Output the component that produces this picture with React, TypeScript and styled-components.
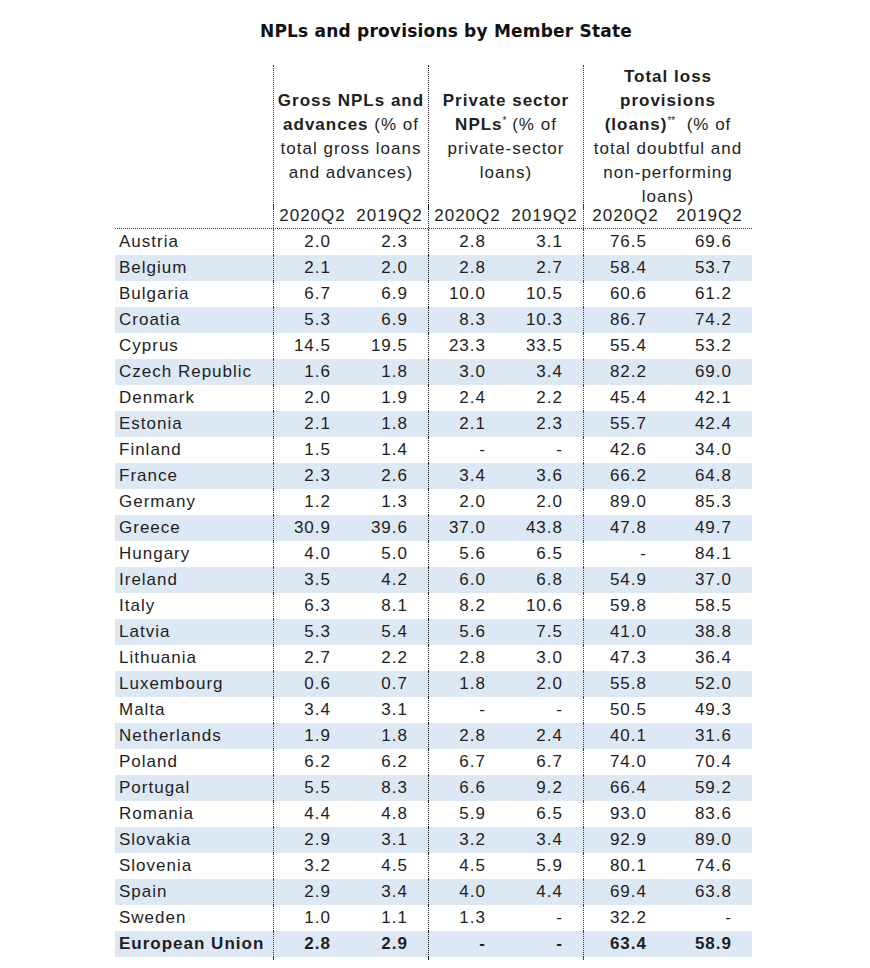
import React from "react";
import styled, { createGlobalStyle } from "styled-components";

const Global = createGlobalStyle`
  html, body { margin: 0; padding: 0; background: #ffffff; }
  body { font-family: "Liberation Sans", Arial, sans-serif; color: #1e1e1e; }
`;

const COLS = "158px 78px 77px 78px 77px 84px 85px";
const LINE = "1px dotted #3a3a3a";
const LINE_DARK = "1px dotted #111111";

const Page = styled.div`
  width: 870px;
  height: 968px;
  display: flex;
  flex-direction: column;
`;

const Title = styled.h1`
  margin: 0;
  padding: 20px 0 0 260px;
  height: 65px;
  box-sizing: border-box;
  font-family: "DejaVu Sans", Verdana, sans-serif;
  font-weight: bold;
  font-size: 17px;
  line-height: 22px;
  letter-spacing: 0.2px;
  color: #111;
`;

const Table = styled.div`
  margin-left: 115px;
  width: 637px;
  display: flex;
  flex-direction: column;
  font-size: 17px;
  letter-spacing: 1px;
`;

const GridRow = styled.div<{ $shaded?: boolean; $h: number; $rule?: boolean }>`
  display: grid;
  grid-template-columns: ${COLS};
  height: ${(p) => p.$h}px;
  background: ${(p) => (p.$shaded ? "#dde8f5" : "transparent")};
  border-bottom: ${(p) => (p.$rule ? LINE : "none")};
`;

const Cell = styled.div<{ $left?: "light" | "dark"; $bold?: boolean; $span?: number }>`
  grid-column: span ${(p) => p.$span ?? 1};
  border-left: ${(p) => (p.$left === "dark" ? LINE_DARK : p.$left === "light" ? LINE : "none")};
  font-weight: ${(p) => (p.$bold ? "bold" : "normal")};
  display: flex;
  align-items: center;
  white-space: nowrap;
  overflow: visible;
  min-width: 0;
`;

const GroupCell = styled(Cell)`
  justify-content: center;
  text-align: center;
  line-height: 24px;
`;

const GroupText = styled.div`
  display: flex;
  flex-direction: column;
  align-items: center;
  width: 100%;
`;

const Bold = styled.span`
  font-weight: bold;
`;

const Star = styled.sup`
  font-size: 10px;
  line-height: 0;
  letter-spacing: 0;
  vertical-align: 6px;
`;

const YearCell = styled(Cell)`
  justify-content: center;
`;

const NameCell = styled(Cell)`
  padding-left: 4px;
`;

const NumCell = styled(Cell)`
  justify-content: flex-end;
  padding-right: 20px;
`;

const Spacer = styled.div`
  display: grid;
  grid-template-columns: ${COLS};
  height: 2px;
`;

type Row = [string, string, string, string, string, string, string];

const rows: Row[] = [
  ["Austria", "2.0", "2.3", "2.8", "3.1", "76.5", "69.6"],
  ["Belgium", "2.1", "2.0", "2.8", "2.7", "58.4", "53.7"],
  ["Bulgaria", "6.7", "6.9", "10.0", "10.5", "60.6", "61.2"],
  ["Croatia", "5.3", "6.9", "8.3", "10.3", "86.7", "74.2"],
  ["Cyprus", "14.5", "19.5", "23.3", "33.5", "55.4", "53.2"],
  ["Czech Republic", "1.6", "1.8", "3.0", "3.4", "82.2", "69.0"],
  ["Denmark", "2.0", "1.9", "2.4", "2.2", "45.4", "42.1"],
  ["Estonia", "2.1", "1.8", "2.1", "2.3", "55.7", "42.4"],
  ["Finland", "1.5", "1.4", "-", "-", "42.6", "34.0"],
  ["France", "2.3", "2.6", "3.4", "3.6", "66.2", "64.8"],
  ["Germany", "1.2", "1.3", "2.0", "2.0", "89.0", "85.3"],
  ["Greece", "30.9", "39.6", "37.0", "43.8", "47.8", "49.7"],
  ["Hungary", "4.0", "5.0", "5.6", "6.5", "-", "84.1"],
  ["Ireland", "3.5", "4.2", "6.0", "6.8", "54.9", "37.0"],
  ["Italy", "6.3", "8.1", "8.2", "10.6", "59.8", "58.5"],
  ["Latvia", "5.3", "5.4", "5.6", "7.5", "41.0", "38.8"],
  ["Lithuania", "2.7", "2.2", "2.8", "3.0", "47.3", "36.4"],
  ["Luxembourg", "0.6", "0.7", "1.8", "2.0", "55.8", "52.0"],
  ["Malta", "3.4", "3.1", "-", "-", "50.5", "49.3"],
  ["Netherlands", "1.9", "1.8", "2.8", "2.4", "40.1", "31.6"],
  ["Poland", "6.2", "6.2", "6.7", "6.7", "74.0", "70.4"],
  ["Portugal", "5.5", "8.3", "6.6", "9.2", "66.4", "59.2"],
  ["Romania", "4.4", "4.8", "5.9", "6.5", "93.0", "83.6"],
  ["Slovakia", "2.9", "3.1", "3.2", "3.4", "92.9", "89.0"],
  ["Slovenia", "3.2", "4.5", "4.5", "5.9", "80.1", "74.6"],
  ["Spain", "2.9", "3.4", "4.0", "4.4", "69.4", "63.8"],
  ["Sweden", "1.0", "1.1", "1.3", "-", "32.2", "-"],
  ["European Union", "2.8", "2.9", "-", "-", "63.4", "58.9"],
];

const leftFor = (i: number): "light" | "dark" | undefined =>
  i === 1 ? "light" : i === 3 ? "dark" : i === 5 ? "light" : undefined;

export default function App() {
  return (
    <Page>
      <Global />
      <Title>NPLs and provisions by Member State</Title>
      <Table>
        <GridRow $h={139}>
          <Cell />
          <GroupCell $left="light" $span={2}>
            <GroupText>
              <Bold>Gross NPLs and</Bold>
              <span>
                <Bold>advances</Bold> (% of
              </span>
              <span>total gross loans</span>
              <span>and advances)</span>
            </GroupText>
          </GroupCell>
          <GroupCell $left="dark" $span={2}>
            <GroupText>
              <Bold>Private sector</Bold>
              <span>
                <Bold>NPLs</Bold>
                <Star>*</Star> (% of
              </span>
              <span>private-sector</span>
              <span>loans)</span>
            </GroupText>
          </GroupCell>
          <GroupCell $left="light" $span={2}>
            <GroupText>
              <Bold>Total loss</Bold>
              <Bold>provisions</Bold>
              <span>
                <Bold>(loans)</Bold>
                <Star>**</Star>&nbsp; (% of
              </span>
              <span>total doubtful and</span>
              <span>non-performing</span>
              <span>loans)</span>
            </GroupText>
          </GroupCell>
        </GridRow>
        <GridRow $h={24} $rule>
          <Cell />
          <YearCell $left="light">2020Q2</YearCell>
          <YearCell>2019Q2</YearCell>
          <YearCell $left="dark">2020Q2</YearCell>
          <YearCell>2019Q2</YearCell>
          <YearCell $left="light">2020Q2</YearCell>
          <YearCell>2019Q2</YearCell>
        </GridRow>
        {rows.map((r, ri) => {
          const bold = ri === rows.length - 1;
          return (
            <GridRow key={r[0]} $h={26} $shaded={ri % 2 === 1}>
              <NameCell $bold={bold}>{r[0]}</NameCell>
              {r.slice(1).map((v, ci) => (
                <NumCell key={ci} $left={leftFor(ci + 1)} $bold={bold}>
                  {v}
                </NumCell>
              ))}
            </GridRow>
          );
        })}
        <Spacer>
          <Cell />
          <Cell $left="light" />
          <Cell />
          <Cell $left="dark" />
          <Cell />
          <Cell $left="light" />
          <Cell />
        </Spacer>
      </Table>
    </Page>
  );
}
